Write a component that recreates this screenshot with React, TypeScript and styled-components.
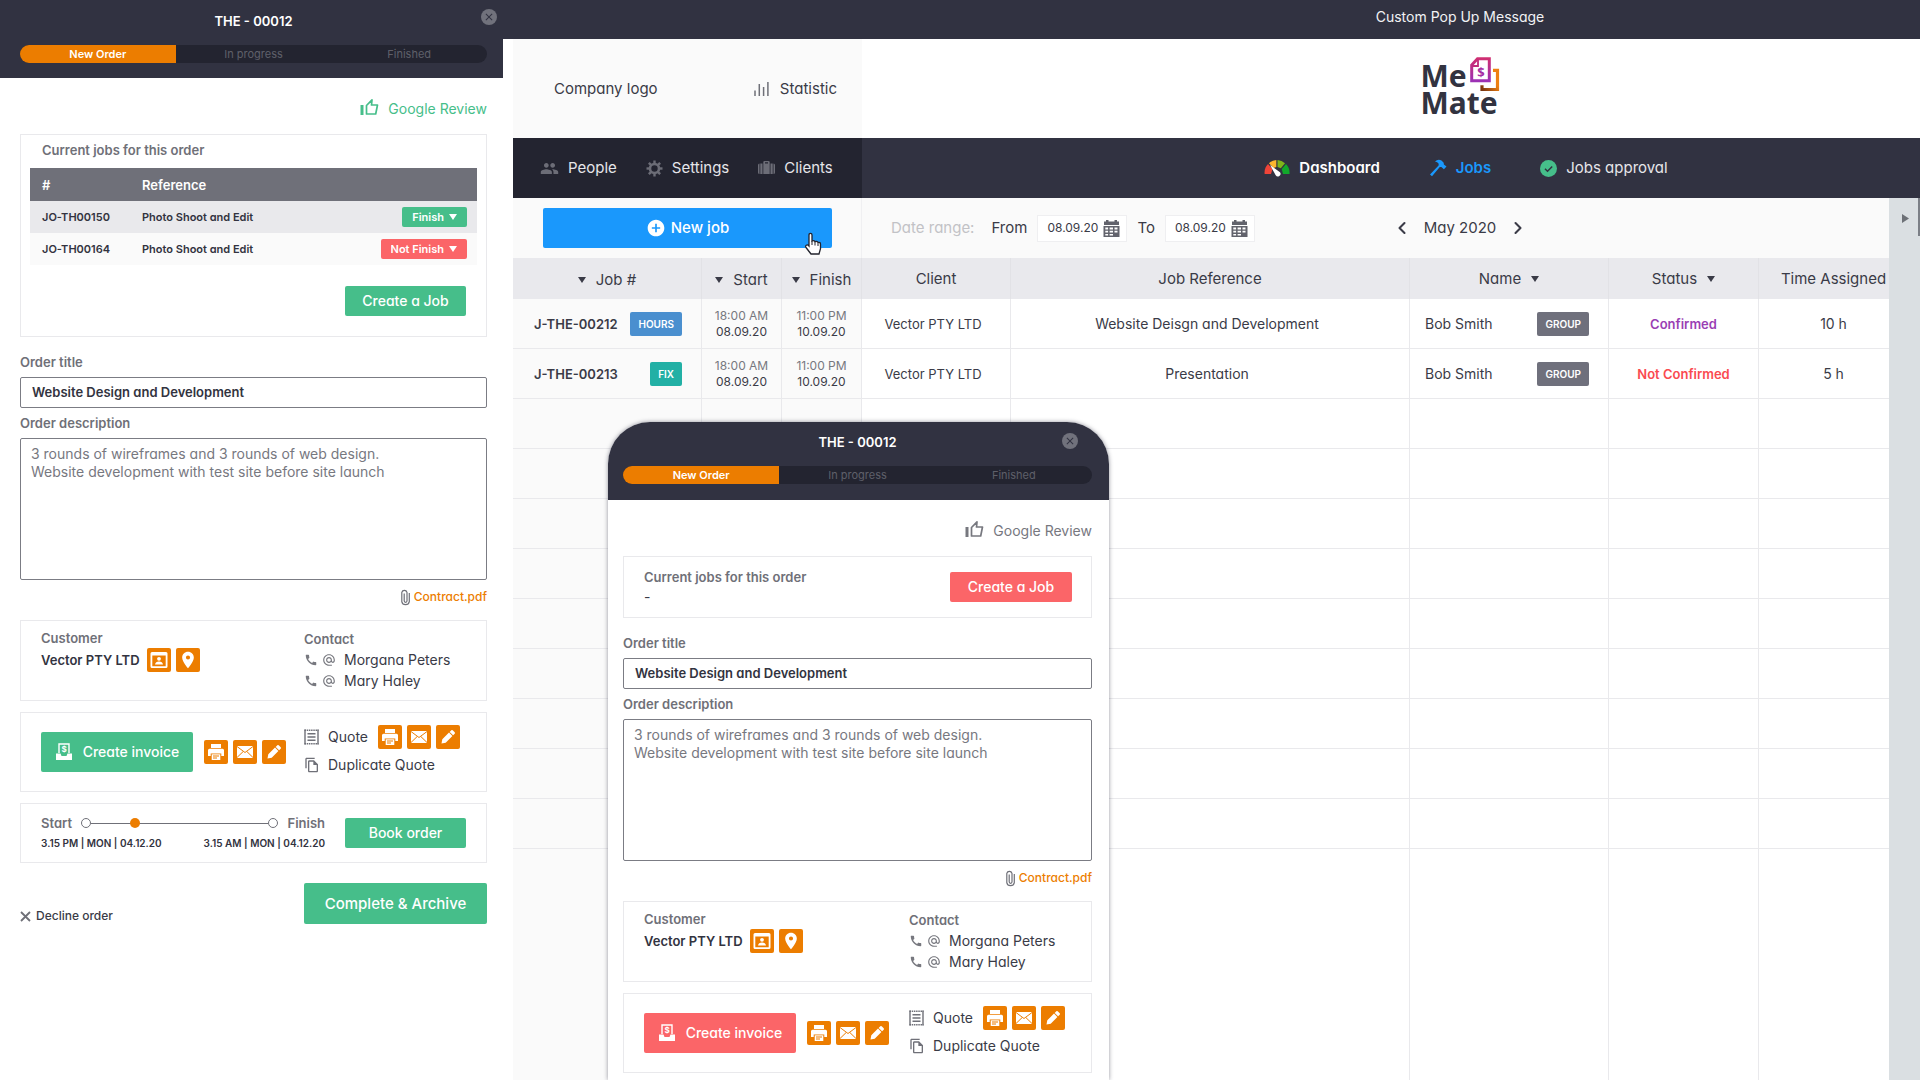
import React, { useId } from 'react';
import styled, { createGlobalStyle, css } from 'styled-components';
import {
  MdAddCircle,
  MdAlternateEmail,
  MdCall,
  MdClose,
  MdOutlineFileCopy,
  MdPeople,
  MdPlace,
} from 'react-icons/md';
import { FiChevronLeft, FiChevronRight } from 'react-icons/fi';

const c = {
  ink: '#323340',
  navy: '#313241',
  navyDark: '#232430',
  text: '#3a3b47',
  label: '#6f7078',
  muted: '#77787f',
  line: '#e9e9ec',
  soft: '#fafafa',
  head: '#e9e9ed',
  green: '#46be8a',
  red: '#fb6568',
  orange: '#ec7d00',
  blue: '#1a98fc',
};

const GlobalStyle = createGlobalStyle`
  *, *::before, *::after { box-sizing: border-box; }
  body {
    margin: 0;
    background: #fff;
    color: ${c.text};
    font-family: Inter, 'Liberation Sans', sans-serif;
    font-size: 14px;
    line-height: 20px;
    font-feature-settings: 'cv11';
  }
  button, input, select, textarea { font: inherit; font-feature-settings: inherit; color: inherit; margin: 0; }
  a { color: inherit; text-decoration: none; }
  svg { display: block; flex: none; }
`;

/* ---------- page frame ---------- */

const Page = styled.div`
  display: flex;
  align-items: flex-start;
  height: 100vh;
  overflow: hidden;
`;

const Side = styled.aside`
  flex: 0 0 503px;
`;

const Workspace = styled.main`
  position: relative;
  flex: 1;
  min-width: 0;
  height: 100%;
`;

const Split = styled.div`
  display: grid;
  grid-template-columns: 349px minmax(0, 1fr);
`;

const TopBar = styled(Split)`
  height: 39px;
  padding-left: 10px;
  background: ${c.navy};
  color: #f2f2f5;
`;

const Message = styled.p`
  grid-column: 2;
  margin: 0;
  padding: 7px 0 0 138px;
  text-align: center;
`;

const Body = styled.div`
  margin-left: 10px;
`;

const BrandRow = styled(Split)`
  height: 99px;
  font-size: 15px;
`;

const Company = styled.div`
  display: flex;
  align-items: center;
  justify-content: space-between;
  padding: 0 25px 0 41px;
  background: ${c.soft};
`;

const StatLink = styled.a`
  display: flex;
  align-items: center;
  gap: 11px;
`;

const LogoArea = styled.div`
  display: flex;
  justify-content: center;
  padding: 18px 0 0 138px;
`;

const Logo = styled.div`
  color: ${c.ink};
  font: 700 30px/27px 'Noto Sans', sans-serif;
`;

const LogoTop = styled.div`
  display: flex;
  gap: 3px;
  height: 32px;
  align-items: flex-end;

  svg { margin-bottom: -4px; }
`;

const NavRow = styled(Split)`
  height: 60px;
  background: ${c.navy};
  color: #e6e6ea;
  font-size: 15px;
`;

const NavLeft = styled.nav`
  display: flex;
  align-items: center;
  gap: 29px;
  padding-left: 27px;
  background: ${c.navyDark};
`;

const NavMain = styled.nav`
  display: flex;
  align-items: center;
  justify-content: center;
  gap: 49px;
  padding-left: 150px;
`;

const NavLink = styled.a<{ $tone?: string; $bold?: boolean }>`
  display: flex;
  align-items: center;
  gap: 9px;
  color: ${(p) => p.$tone ?? 'inherit'};
  font-weight: ${(p) => (p.$bold ? 600 : 400)};
`;

/* ---------- toolbar ---------- */

const Toolbar = styled(Split)`
  height: 60px;
  background: ${c.soft};
  font-size: 15px;
`;

const NewJobCell = styled.div`
  position: relative;
  padding: 10px 29px 10px 30px;
  border-right: 1px solid #f0f0f2;
`;

const NewJob = styled.button`
  display: flex;
  align-items: center;
  justify-content: center;
  gap: 5px;
  width: 100%;
  height: 40px;
  border: 0;
  border-radius: 2px;
  background: ${c.blue};
  color: #fff;
  font-weight: 500;
`;

const Pointer = styled.svg`
  position: absolute;
  right: 38px;
  top: 34px;
`;

const Filters = styled.div`
  display: grid;
  grid-template-columns: 1fr auto 1fr;
  align-items: center;
  margin-right: -140px;
  padding-left: 29px;
`;

const Range = styled.div`
  display: flex;
  align-items: center;
  gap: 10px;
`;

const RangeTitle = styled.span`
  margin-right: 7px;
  color: #c2c2c6;
`;

const DateBox = styled.span`
  display: flex;
  align-items: center;
  justify-content: space-between;
  width: 90px;
  height: 27px;
  padding: 0 6px 0 9px;
  border: 1px solid #efeff1;
  background: #fff;
`;

const DateInput = styled.input`
  width: 54px;
  padding: 0;
  border: 0;
  background: none;
  font-size: 12px;
`;

const IconButton = styled.button`
  display: inline-flex;
  padding: 0;
  border: 0;
  background: none;
  color: inherit;
`;

const Month = styled.div`
  display: flex;
  align-items: center;
  gap: 12px;
`;

/* ---------- jobs table ---------- */

const TableClip = styled.div`
  overflow: hidden;
`;

const Jobs = styled.table`
  width: calc(100% + 20px);
  table-layout: fixed;
  border-collapse: separate;
  border-spacing: 0;
`;

const Th = styled.th`
  height: 41px;
  padding: 0;
  border-right: 1px solid #e2e2e6;
  background: ${c.head};
  font-size: 15px;
  font-weight: 400;
  white-space: nowrap;
`;

const Td = styled.td<{ $side?: boolean; $text?: boolean }>`
  height: 50px;
  padding: 0 ${(p) => (p.$text ? 6 : 0)}px 0 0;
  border-right: 1px solid ${c.line};
  border-bottom: 1px solid ${c.line};
  background: ${(p) => (p.$side ? c.soft : '#fff')};
  text-align: center;
`;

const ClientTd = styled(Td)`
  font-size: 13px;
`;

const Filler = styled(Td)`
  height: calc(100vh - 849px);
  border-bottom: 0;
`;

const SortButton = styled.button`
  display: inline-flex;
  align-items: center;
  gap: 10px;
  padding: 0;
  border: 0;
  background: none;
`;

const CellRow = styled.div`
  display: flex;
  align-items: center;
  justify-content: space-between;
  padding: 0 19px 0 21px;
`;

const NameRow = styled(CellRow)`
  padding: 0 19px 0 15px;
`;

const JobLink = styled.a`
  font-size: 13px;
  font-weight: 600;
`;

const Tag = styled.span<{ $bg: string }>`
  padding: 0 8px;
  border-radius: 2px;
  background: ${(p) => p.$bg};
  color: #fff;
  font-size: 10px;
  font-weight: 600;
  line-height: 24px;
`;

const Times = styled.div`
  font-size: 12px;
  line-height: 16px;

  span { display: block; color: ${c.muted}; }
`;

const State = styled.span<{ $tone: string }>`
  color: ${(p) => p.$tone};
  font-size: 13px;
  font-weight: 600;
`;

const Content = styled.div`
  display: grid;
  grid-template-columns: minmax(0, 1fr) 31px;
`;

const Drawer = styled.div`
  display: flex;
  justify-content: space-between;
  background: #dadfe2;
`;

const DrawerToggle = styled(IconButton)`
  padding: 16px 0 0 13px;
  align-self: flex-start;
`;

const DrawerHandle = styled.span`
  width: 2px;
  height: 38px;
  background: #7b7f86;
`;

/* ---------- order panel ---------- */

const Popup = styled.section`
  position: absolute;
  left: 105px;
  top: 422px;
  bottom: 0;
  width: 501px;
  overflow: hidden;
  border-radius: 42px 42px 0 0;
  background: #fff;
  box-shadow: 0 0 4px rgba(40, 40, 60, 0.5);
`;

const Panel = styled.div<{ $popup: boolean }>`
  padding: ${(p) => (p.$popup ? '0 17px 0 15px' : '0 16px 0 20px')};
`;

const PanelHead = styled.header<{ $popup: boolean }>`
  position: relative;
  height: 78px;
  margin: ${(p) => (p.$popup ? '0 -17px 0 -15px' : '0 -16px 0 -20px')};
  padding: ${(p) => (p.$popup ? '10px 17px 0 15px' : '11px 16px 0 20px')};
  background: ${c.navy};
`;

const PanelTitle = styled.h2`
  margin: 0 0 14px;
  color: #fff;
  font-size: 13px;
  font-weight: 600;
  line-height: 20px;
  text-align: center;
`;

const Close = styled.button<{ $popup: boolean }>`
  position: absolute;
  top: ${(p) => (p.$popup ? '11px' : '9px')};
  right: ${(p) => (p.$popup ? '31px' : '6px')};
  display: flex;
  padding: 2px;
  border: 0;
  border-radius: 50%;
  background: #71727c;
  color: ${c.navy};
`;

const Steps = styled.ol`
  display: grid;
  grid-template-columns: repeat(3, 1fr);
  height: 18px;
  margin: 0;
  padding: 0;
  overflow: hidden;
  border-radius: 9px;
  background: ${c.navyDark};
  list-style: none;
`;

const Step = styled.li<{ $on?: boolean }>`
  color: #5f606a;
  font-size: 11px;
  line-height: 18px;
  text-align: center;
  ${(p) =>
    p.$on &&
    css`
      background: ${c.orange};
      color: #fff;
      font-weight: 600;
    `}
`;

const Review = styled.a<{ $tone: string }>`
  display: flex;
  align-items: center;
  justify-content: flex-end;
  gap: 9px;
  height: 22px;
  margin: 20px 0 14px;
  color: ${(p) => p.$tone};

  svg { margin-bottom: 4px; }
`;

const Card = styled.div`
  border: 1px solid ${c.line};
`;

const OrderJobs = styled(Card)`
  height: 203px;
  padding: 5px 9px;
`;

const NoJobs = styled(Card)`
  display: flex;
  align-items: center;
  justify-content: space-between;
  height: 62px;
  padding: 0 19px 0 20px;
`;

const captionText = css`
  color: ${c.label};
  font-size: 13px;
  font-weight: 600;
`;

const Caption = styled.h3`
  ${captionText}
  margin: 0;
`;

const JobsCaption = styled.caption`
  ${captionText}
  padding: 0 0 8px 12px;
  text-align: left;
`;

const OrderTable = styled.table`
  width: 100%;
  table-layout: fixed;
  border-collapse: collapse;
  margin-bottom: 21px;
  color: ${c.ink};
  font-size: 11px;
  font-weight: 600;

  td, th { padding: 0 0 0 12px; height: 33px; text-align: left; }
  th { background: #6f7079; color: #fff; font-size: 13px; font-weight: 600; }
  td { height: 32px; }
  tbody tr:nth-child(odd) { background: #e9e9ec; }
  tbody tr:nth-child(even) { background: ${c.soft}; }
  td:last-child { padding: 0 10px 0 0; text-align: right; }
`;

const PickWrap = styled.span<{ $bg: string }>`
  display: inline-flex;
  align-items: center;
  height: 20px;
  padding: 0 10px;
  border-radius: 2px;
  background: ${(p) => p.$bg};
  color: #fff;

  select {
    appearance: none;
    padding: 0 14px 0 0;
    border: 0;
    background: none;
    field-sizing: content;
  }
  svg { margin-left: -9px; pointer-events: none; }
`;

const Action = styled.button<{ $bg: string; $w: number; $h: number }>`
  display: flex;
  align-items: center;
  justify-content: center;
  gap: 10px;
  flex: none;
  width: ${(p) => p.$w}px;
  height: ${(p) => p.$h}px;
  padding: 0;
  border: 0;
  border-radius: 2px;
  background: ${(p) => p.$bg};
  color: #fff;
  font-weight: 500;
`;

const EndRow = styled.div`
  display: flex;
  justify-content: flex-end;
  padding-right: 11px;
`;

const Field = styled.div<{ $first?: boolean }>`
  padding-top: ${(p) => (p.$first ? 15 : 5)}px;
`;

const Label = styled.label`
  ${captionText}
  display: block;
  margin-bottom: 5px;
`;

const boxed = css`
  display: block;
  width: 100%;
  border: 1px solid #7b7c84;
  border-radius: 2px;
  background: #fff;
`;

const TitleInput = styled.input`
  ${boxed}
  height: 31px;
  padding: 0 11px 1px;
  color: ${c.ink};
  font-size: 13px;
  font-weight: 600;
`;

const Description = styled.textarea`
  ${boxed}
  height: 142px;
  padding: 6px 10px;
  color: ${c.muted};
  font-size: 14px;
  line-height: 18px;
  resize: none;
`;

const Attachment = styled.a`
  display: flex;
  align-items: center;
  justify-content: flex-end;
  gap: 4px;
  margin: 7px 0 13px;
  color: ${c.orange};
  font-size: 12px;
  font-weight: 500;
`;

const TwoCol = styled(Card)<{ $h: number }>`
  display: grid;
  grid-template-columns: minmax(0, 1fr) 182px;
  height: ${(p) => p.$h}px;
  margin-bottom: 11px;
  padding-left: 20px;
`;

const Stack = styled.div<{ $top: number }>`
  padding-top: ${(p) => p.$top}px;
`;

const Line = styled.div<{ $gap: number }>`
  display: flex;
  align-items: center;
  gap: ${(p) => p.$gap}px;
`;

const Customer = styled.strong`
  margin-right: 2px;
  color: ${c.ink};
  font-size: 13px;
  font-weight: 600;
`;

const Person = styled(Line)`
  height: 21px;
  color: ${c.muted};

  span { margin-left: 4px; color: ${c.text}; }
`;

const Square = styled.button`
  display: flex;
  align-items: center;
  justify-content: center;
  width: 24px;
  height: 24px;
  padding: 0;
  border: 0;
  border-radius: 2px;
  background: ${c.orange};
  color: #fff;
`;

const SquareSet = styled.div`
  display: flex;
  gap: 5px;
`;

const Quote = styled(Line)`
  height: 28px;
  color: ${c.label};

  > span { width: 41px; color: ${c.text}; white-space: nowrap; }
`;

const Booking = styled(Card)`
  display: flex;
  align-items: center;
  justify-content: space-between;
  height: 60px;
  padding: 0 20px;
`;

const Timeline = styled.div`
  width: 284px;
`;

const Track = styled.div`
  ${captionText}
  display: flex;
  align-items: center;

  label { margin-right: 9px; }
  output { margin-left: 9px; }
`;

const Ring = styled.i`
  width: 10px;
  height: 10px;
  flex: none;
  border: 1px solid #6f7078;
  border-radius: 50%;
`;

const Slider = styled.input`
  appearance: none;
  flex: 1;
  min-width: 0;
  height: 10px;
  background: linear-gradient(#6f7078, #6f7078) center / 100% 1px no-repeat;

  &::-webkit-slider-thumb {
    appearance: none;
    width: 10px;
    height: 10px;
    border-radius: 50%;
    background: ${c.orange};
  }
`;

const Stamps = styled.div`
  display: flex;
  justify-content: space-between;
  color: ${c.ink};
  font-size: 10px;
  font-weight: 600;
`;

const Footer = styled.footer`
  display: flex;
  align-items: flex-end;
  justify-content: space-between;
  margin-top: 20px;
  font-size: 15px;
`;

const Decline = styled.button`
  display: flex;
  align-items: center;
  gap: 5px;
  padding: 0;
  border: 0;
  background: none;
  font-size: 12px;
  font-weight: 500;
  line-height: 16px;
`;

/* ---------- drawings ---------- */

const Caret = ({ size = 8 }: { size?: number }) => (
  <svg width={size} height={size - 2} viewBox="0 0 8 6" fill="currentColor">
    <path d="M0 0h8L4 6z" />
  </svg>
);

const CrossIcon = () => (
  <svg width="11" height="11" viewBox="0 0 11 11" stroke={c.label} strokeWidth="1.800">
    <path d="m1 1 9 9M10 1l-9 9" />
  </svg>
);

const ThumbIcon = () => (
  <svg width="19" height="18" viewBox="0 0 19 18" fill="none" stroke="currentColor">
    <path d="M2 7v10" strokeWidth="3" />
    <path d="M6.500 7.500 12 1.800 11.500 7h6l-1.800 9H6.500z" strokeWidth="1.700" strokeLinejoin="round" />
  </svg>
);

const PrinterIcon = () => (
  <svg width="18" height="18" viewBox="0 0 18 18" fill="#fff">
    <path d="M4 1h10v4H4z" />
    <path d="M2.500 5.800h13Q17 5.800 17 7.300V13h-2.700v-2.500H3.700V13H1V7.300Q1 5.800 2.500 5.800z" />
    <path d="M4.700 11.300h8.600V17H4.700z" />
    <path d="M6 13h6M6 15h4" stroke={c.orange} strokeWidth="1" />
  </svg>
);

const MailIcon = () => (
  <svg width="18" height="14" viewBox="0 0 18 14">
    <path fill="#fff" d="M1 1h16v12H1z" />
    <path d="m1 1.500 8 6 8-6M1 12.500l6-5.800M17 12.500l-6-5.800" fill="none" stroke={c.orange} strokeWidth="1" />
  </svg>
);

const PencilIcon = () => (
  <svg width="16" height="16" viewBox="0 0 16 16" fill="#fff">
    <path d="m1.500 14.500.8-4.200L9 3.600 12.400 7l-6.700 6.700zM9.700 2.900 11.300 1.300q.7-.6 1.400 0l2 2q.6.7 0 1.400l-1.600 1.600z" />
  </svg>
);

const ContactIcon = () => (
  <svg width="18" height="16" viewBox="0 0 18 16" fill="#fff">
    <path d="M2 0h14q1.500 0 1.500 1.500v13Q17.500 16 16 16H2q-1.500 0-1.500-1.500v-13Q.5 0 2 0zm.3 3.500v10.700h13.400V3.500z" fillRule="evenodd" />
    <circle cx="9" cy="6.800" r="1.900" />
    <path d="M5 12.500q.5-3 4-3t4 3z" />
  </svg>
);

const ClipIcon = () => (
  <svg width="9" height="17" viewBox="0 0 9 17" fill="none" stroke="#6f7078" strokeWidth="1.200">
    <path d="M8.300 4v8.700a3.800 3.600 0 0 1-7.500 0V3.400a2.700 2.700 0 0 1 5.200 0v8.400a1.400 1.500 0 0 1-2.800 0V4.500" />
  </svg>
);

const InvoiceIcon = () => (
  <svg width="18" height="18" viewBox="0 0 18 18" fill="none">
    <path d="M4 10V1h10v9" stroke="#fff" strokeWidth="1.400" />
    <path d="M1 10.500h4.500l1 2.500h5l1-2.500H17V17H1z" fill="#fff" />
    <text x="9" y="9" fill="#fff" fontSize="8" fontWeight="700" textAnchor="middle">$</text>
  </svg>
);

const QuoteIcon = () => (
  <svg width="15" height="16" viewBox="0 0 15 16" fill="none" stroke="currentColor">
    <path d="M1 .5v15M14 .5v15" strokeWidth="1.400" />
    <path d="M.5 1.200h14M.5 14.800h14" strokeWidth="1.600" strokeDasharray="1.500 .7" />
    <path d="M3.500 4.800h8M3.500 8h8M3.500 11.200h8" strokeWidth="1.400" />
  </svg>
);

const BarsIcon = () => (
  <svg width="15" height="14" viewBox="0 0 15 14" stroke={c.label} strokeWidth="1.500">
    <path d="M1 14V8.500M5.300 14V2M9.600 14V5M13.900 14V0" />
  </svg>
);

const GearIcon = () => (
  <svg width="17" height="17" viewBox="0 0 17 17" fill="none" stroke="#6c6d77">
    <circle cx="8.500" cy="8.500" r="4.500" strokeWidth="2.600" />
    {[0, 45, 90, 135, 180, 225, 270, 315].map((a) => (
      <path key={a} d="M8.500 .5v3" strokeWidth="2.400" transform={`rotate(${a} 8.500 8.500)`} />
    ))}
  </svg>
);

const CaseIcon = () => (
  <svg width="17" height="14" viewBox="0 0 17 14" fill="#6c6d77">
    <path d="M0 4q0-1.500 1.500-1.500V13Q0 13 0 11.500zM15.500 2.500Q17 2.500 17 4v7.500Q17 13 15.500 13zM2.300 2.500h2.200V13H2.300zM12.500 2.500h2.200V13h-2.200zM5.300 2.500V1.300Q5.300 0 6.600 0h3.800q1.300 0 1.300 1.300v1.200V13H5.300zM7 1.300v1.200h3V1.300z" fillRule="evenodd" />
  </svg>
);

const GaugeIcon = () => (
  <svg width="26" height="18" viewBox="0 0 26 18">
    <path d="M.5 14A12.500 12.500 0 0 1 4 5l4.500 5L7 15H.7z" fill="#ef4438" />
    <path d="M5 4.200A12.500 12.500 0 0 1 12.300.9v7L9.500 9z" fill="#fdb62f" />
    <path d="M13.500.9A12.500 12.500 0 0 1 21 4.200l-4.200 5-3.300-1.300z" fill="#7fb51a" />
    <path d="M22 5a12.500 12.500 0 0 1 3.500 10H19l-1.300-5z" fill="#12a82b" />
    <path d="m6 6 10 7.300a2.600 2.600 0 1 1-4.300 3z" fill="#fff" />
  </svg>
);

const HammerIcon = () => (
  <svg width="18" height="18" viewBox="0 0 18 18" fill={c.blue}>
    <path d="M6 2.500Q9-.5 12.500 1.500l2.200 2.300.2 1.700 2.600 2-2.600 2.800-2.500-2.400-1.600.1L3 17.300 1 15.500l8.600-8.900.1-1.800Q8.500 3 6 2.500z" />
  </svg>
);

const CheckIcon = () => (
  <svg width="17" height="17" viewBox="0 0 17 17">
    <circle cx="8.500" cy="8.500" r="8.500" fill={c.green} />
    <path d="m5 8.800 2.500 2.400 4.700-4.700" fill="none" stroke={c.navy} strokeWidth="1.500" />
  </svg>
);

const CalendarIcon = () => (
  <svg width="17" height="17" viewBox="0 0 17 17" fill="#62636c">
    <path d="M3 0h2.500v1.500h6V0H14v1.500h2V5H1V1.500h2z" />
    <path d="M.5 6h16v11H.5zM2.300 7.500v2h2.800v-2zm4.300 0v2H10v-2zm4.900 0v2h3v-2zM2.300 10.800v1.800h2.800v-1.800zm4.300 0v1.800H10v-1.800zm4.900 0v1.800h3v-1.800zM2.300 14v1.600h2.800V14zm4.300 0v1.600H10V14z" fillRule="evenodd" />
  </svg>
);

const LogoMark = () => (
  <svg width="30" height="36" viewBox="0 0 30 36" fill="none">
    <defs>
      <linearGradient id="mark-doc" x1="0" y1="0" x2="0" y2="1">
        <stop offset="0" stopColor="#cf2f72" />
        <stop offset="1" stopColor="#9c31b4" />
      </linearGradient>
      <linearGradient id="mark-tray" x1="0" y1="1" x2="1" y2="0">
        <stop offset="0" stopColor="#7a3610" />
        <stop offset="0.600" stopColor="#ee8011" />
      </linearGradient>
    </defs>
    <path d="M7.500 1.700h11.800v22H1.700V8z" stroke="url(#mark-doc)" strokeWidth="3" />
    <path d="M2 9h6V2.500" stroke="#c02c7c" strokeWidth="1.800" />
    <text x="11" y="20" fill="#a52fa5" fontSize="13" fontWeight="700" textAnchor="middle">$</text>
    <path d="M23 13.300h4.500v19.200H12v-4.300" stroke="url(#mark-tray)" strokeWidth="3.200" />
  </svg>
);

/* ---------- order form ---------- */

const DocActions = () => (
  <SquareSet>
    <Square aria-label="Print"><PrinterIcon /></Square>
    <Square aria-label="Email"><MailIcon /></Square>
    <Square aria-label="Edit"><PencilIcon /></Square>
  </SquareSet>
);

const orderJobs = [
  { id: 'JO-TH00150', ref: 'Photo Shoot and Edit', state: 'Finish', tone: c.green },
  { id: 'JO-TH00164', ref: 'Photo Shoot and Edit', state: 'Not Finish', tone: c.red },
];

function OrderPanel({ popup = false }: { popup?: boolean }) {
  const id = useId();
  const accent = popup ? c.red : c.green;
  return (
    <Panel $popup={popup}>
      <PanelHead $popup={popup}>
        <PanelTitle>THE - 00012</PanelTitle>
        <Close $popup={popup} aria-label="Close"><MdClose size={12} /></Close>
        <Steps>
          <Step $on>New Order</Step>
          <Step>In progress</Step>
          <Step>Finished</Step>
        </Steps>
      </PanelHead>

      <Review href="#review" $tone={popup ? c.muted : c.green}>
        <ThumbIcon />
        Google Review
      </Review>

      {popup ? (
        <NoJobs>
          <div>
            <Caption>Current jobs for this order</Caption>
            <div>-</div>
          </div>
          <Action $bg={accent} $w={122} $h={30}>Create a Job</Action>
        </NoJobs>
      ) : (
        <OrderJobs>
          <OrderTable>
            <JobsCaption>Current jobs for this order</JobsCaption>
            <colgroup>
              <col style={{ width: 100 }} />
              <col />
              <col style={{ width: 120 }} />
            </colgroup>
            <thead>
              <tr><th>#</th><th>Reference</th><th aria-label="State" /></tr>
            </thead>
            <tbody>
              {orderJobs.map((j) => (
                <tr key={j.id}>
                  <td>{j.id}</td>
                  <td>{j.ref}</td>
                  <td>
                    <PickWrap $bg={j.tone}>
                      <select aria-label={`State of ${j.id}`} defaultValue={j.state}>
                        <option>{j.state}</option>
                      </select>
                      <Caret />
                    </PickWrap>
                  </td>
                </tr>
              ))}
            </tbody>
          </OrderTable>
          <EndRow>
            <Action $bg={accent} $w={121} $h={30}>Create a Job</Action>
          </EndRow>
        </OrderJobs>
      )}

      <Field $first>
        <Label htmlFor={`${id}-title`}>Order title</Label>
        <TitleInput id={`${id}-title`} defaultValue="Website Design and Development" />
      </Field>
      <Field>
        <Label htmlFor={`${id}-text`}>Order description</Label>
        <Description
          id={`${id}-text`}
          defaultValue={'3 rounds of wireframes and 3 rounds of web design.\nWebsite development with test site before site launch'}
        />
      </Field>
      <Attachment href="#contract">
        <ClipIcon />
        Contract.pdf
      </Attachment>

      <TwoCol $h={81}>
        <Stack $top={7}>
          <Caption>Customer</Caption>
          <Line $gap={5}>
            <Customer>Vector PTY LTD</Customer>
            <Square aria-label="Contact card"><ContactIcon /></Square>
            <Square aria-label="Location"><MdPlace size={20} /></Square>
          </Line>
        </Stack>
        <Stack $top={8}>
          <Caption>Contact</Caption>
          {['Morgana Peters', 'Mary Haley'].map((name) => (
            <Person key={name} $gap={4}>
              <MdCall size={14} />
              <MdAlternateEmail size={14} />
              <span>{name}</span>
            </Person>
          ))}
        </Stack>
      </TwoCol>

      <TwoCol $h={80}>
        <Line $gap={11}>
          <Action $bg={accent} $w={152} $h={40}><InvoiceIcon />Create invoice</Action>
          <DocActions />
        </Line>
        <Stack $top={10}>
          <Quote $gap={9}>
            <QuoteIcon />
            <span>Quote</span>
            <DocActions />
          </Quote>
          <Quote $gap={8}>
            <MdOutlineFileCopy size={16} />
            <span>Duplicate Quote</span>
          </Quote>
        </Stack>
      </TwoCol>

      {!popup && (
        <>
          <Booking>
            <Timeline>
              <Track>
                <label htmlFor={`${id}-time`}>Start</label>
                <Ring />
                <Slider id={`${id}-time`} type="range" min={0} max={100} defaultValue={23} />
                <Ring />
                <output htmlFor={`${id}-time`}>Finish</output>
              </Track>
              <Stamps>
                <span>3.15 PM | MON | 04.12.20</span>
                <span>3.15 AM | MON | 04.12.20</span>
              </Stamps>
            </Timeline>
            <Action $bg={accent} $w={121} $h={30}>Book order</Action>
          </Booking>
          <Footer>
            <Decline><CrossIcon />Decline order</Decline>
            <Action $bg={accent} $w={183} $h={41}>Complete &amp; Archive</Action>
          </Footer>
        </>
      )}
    </Panel>
  );
}

/* ---------- jobs board ---------- */

const jobs = [
  { id: 'J-THE-00212', tag: 'HOURS', tagTone: '#4a8fcf', ref: 'Website Deisgn and Development', state: 'Confirmed', tone: '#9a3fb4', time: '10 h' },
  { id: 'J-THE-00213', tag: 'FIX', tagTone: '#22b0a5', ref: 'Presentation', state: 'Not Confirmed', tone: '#fa4b50', time: '5 h' },
];

const widths = [189, 80, 80, 149, 0, 199, 150, 150];

const DateField = ({ label }: { label: string }) => {
  const id = useId();
  return (
    <>
      <label htmlFor={id}>{label}</label>
      <DateBox>
        <DateInput id={id} defaultValue="08.09.20" />
        <IconButton aria-label={`Pick date: ${label}`}><CalendarIcon /></IconButton>
      </DateBox>
    </>
  );
};

function JobsTable() {
  return (
    <TableClip>
      <Jobs>
        <colgroup>
          {widths.map((w, i) => <col key={i} style={w ? { width: w } : undefined} />)}
        </colgroup>
        <thead>
          <tr>
            <Th><SortButton><Caret />Job #</SortButton></Th>
            <Th><SortButton><Caret />Start</SortButton></Th>
            <Th><SortButton><Caret />Finish</SortButton></Th>
            <Th>Client</Th>
            <Th>Job Reference</Th>
            <Th><SortButton>Name<Caret /></SortButton></Th>
            <Th><SortButton>Status<Caret /></SortButton></Th>
            <Th>Time Assigned</Th>
          </tr>
        </thead>
        <tbody>
          {jobs.map((j) => (
            <tr key={j.id}>
              <Td $side>
                <CellRow>
                  <JobLink href={`#${j.id}`}>{j.id}</JobLink>
                  <Tag $bg={j.tagTone}>{j.tag}</Tag>
                </CellRow>
              </Td>
              <Td $side><Times><span>18:00 AM</span>08.09.20</Times></Td>
              <Td $side><Times><span>11:00 PM</span>10.09.20</Times></Td>
              <ClientTd $text>Vector PTY LTD</ClientTd>
              <Td $text>{j.ref}</Td>
              <Td><NameRow>Bob Smith<Tag $bg="#6f707c">GROUP</Tag></NameRow></Td>
              <Td><State $tone={j.tone}>{j.state}</State></Td>
              <Td>{j.time}</Td>
            </tr>
          ))}
          {Array.from({ length: 9 }, (_, r) => (
            <tr key={r}>{widths.map((_w, i) => <Td key={i} $side={i < 3} />)}</tr>
          ))}
          <tr>{widths.map((_w, i) => <Filler key={i} $side={i < 3} />)}</tr>
        </tbody>
      </Jobs>
    </TableClip>
  );
}

export default function App() {
  return (
    <>
      <GlobalStyle />
      <Page>
        <Side><OrderPanel /></Side>
        <Workspace>
          <TopBar><Message>Custom Pop Up Message</Message></TopBar>
          <Body>
            <BrandRow>
              <Company>
                <span>Company logo</span>
                <StatLink href="#statistic"><BarsIcon />Statistic</StatLink>
              </Company>
              <LogoArea>
                <Logo>
                  <LogoTop>Me<LogoMark /></LogoTop>
                  Mate
                </Logo>
              </LogoArea>
            </BrandRow>
            <NavRow>
              <NavLeft>
                <NavLink href="#people"><MdPeople size={19} color="#6c6d77" />People</NavLink>
                <NavLink href="#settings"><GearIcon />Settings</NavLink>
                <NavLink href="#clients"><CaseIcon />Clients</NavLink>
              </NavLeft>
              <NavMain>
                <NavLink href="#dashboard" $tone="#fff" $bold><GaugeIcon />Dashboard</NavLink>
                <NavLink href="#jobs" $tone={c.blue} $bold><HammerIcon />Jobs</NavLink>
                <NavLink href="#approval"><CheckIcon />Jobs approval</NavLink>
              </NavMain>
            </NavRow>
            <Content>
              <div>
                <Toolbar>
                  <NewJobCell>
                    <NewJob><MdAddCircle size={20} />New job</NewJob>
                    <Pointer width="20" height="23" viewBox="0 0 20 23">
                      <path
                        d="M6 14V3q0-1.700 1.500-1.700T9 3v6q2-1 3 .6 2-.8 3 .8 2.500-.4 2.500 1.800v4.500L16 22H8L3 15.500q-1-1.500.3-2.300T6 14z"
                        fill="#fff"
                        stroke="#22232c"
                        strokeWidth="1.300"
                      />
                      <path d="M9 9v4M12 10v3.500M15 11v3" stroke="#22232c" />
                    </Pointer>
                  </NewJobCell>
                  <Filters>
                    <Range>
                      <RangeTitle>Date range:</RangeTitle>
                      <DateField label="From" />
                      <DateField label="To" />
                    </Range>
                    <Month>
                      <IconButton aria-label="Previous month"><FiChevronLeft size={20} strokeWidth={2.5} /></IconButton>
                      May 2020
                      <IconButton aria-label="Next month"><FiChevronRight size={20} strokeWidth={2.5} /></IconButton>
                    </Month>
                  </Filters>
                </Toolbar>
                <JobsTable />
              </div>
              <Drawer>
                <DrawerToggle aria-label="Open drawer">
                  <svg width="7" height="9" viewBox="0 0 7 9" fill="#6d7177"><path d="M0 0v9l7-4.500z" /></svg>
                </DrawerToggle>
                <DrawerHandle />
              </Drawer>
            </Content>
          </Body>
          <Popup><OrderPanel popup /></Popup>
        </Workspace>
      </Page>
    </>
  );
}
